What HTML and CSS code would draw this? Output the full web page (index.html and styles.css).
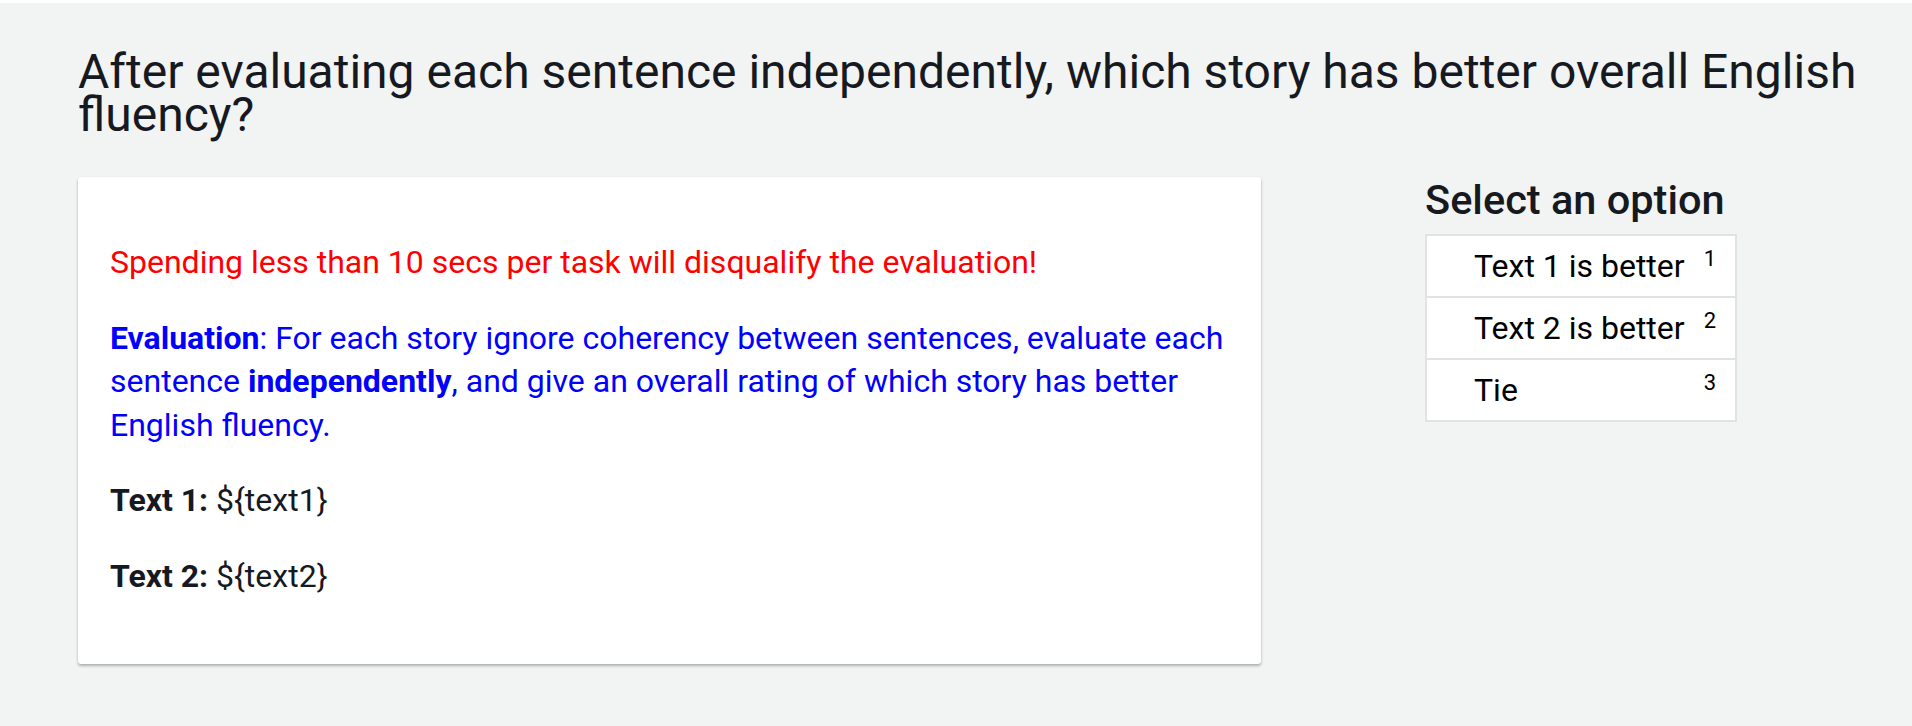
FILE: index.html
```html
<!DOCTYPE html>
<html lang="en">
<head>
<meta charset="utf-8">
<title>Classifier</title>
<link rel="stylesheet" href="styles.css">
</head>
<body>
<div class="page">
  <h1 class="question">After evaluating each sentence independently, which story has better overall English fluency?</h1>
  <div class="layout">
    <section class="card">
      <p class="warn">Spending less than 10 secs per task will disqualify the evaluation!</p>
      <p class="instr"><b>Evaluation</b>: For each story ignore coherency between sentences, evaluate each sentence <b>independently</b>, and give an overall rating of which story has better English fluency.</p>
      <p class="sample"><b>Text 1:</b> ${text1}</p>
      <p class="sample"><b>Text 2:</b> ${text2}</p>
    </section>
    <aside class="options">
      <h2 class="options-title">Select an option</h2>
      <ul class="option-list">
        <li class="option"><span class="label">Text 1 is better</span><span class="key">1</span></li>
        <li class="option"><span class="label">Text 2 is better</span><span class="key">2</span></li>
        <li class="option"><span class="label">Tie</span><span class="key">3</span></li>
      </ul>
    </aside>
  </div>
</div>
</body>
</html>
```
FILE: styles.css
```css
html, body {
  margin: 0;
  padding: 0;
  background: #ffffff;
}

body {
  font-family: Roboto, "Liberation Sans", Arial, sans-serif;
  color: #16191f;
}

.page {
  margin-top: 3px;
  min-height: 723px;
  box-sizing: border-box;
  background: #f2f3f3;
  padding: 47px 40px 0 78px;
}

.question {
  margin: 0;
  font-size: 48px;
  font-weight: 400;
  line-height: 43.2px;
  color: #16191f;
}

.layout {
  display: grid;
  grid-template-columns: 1183px 312px;
  column-gap: 164px;
  align-items: start;
  margin-top: 41px;
}

.card {
  background: #ffffff;
  border-radius: 3px;
  box-shadow: 0 2px 3px rgba(0, 0, 0, 0.28), 0 0 1px rgba(0, 0, 0, 0.12);
  padding: 32px 32px 34px;
  font-size: 32px;
  line-height: 43.5px;
}

.card p {
  margin: 32px 0;
}

.warn {
  color: #ff0000;
}

.instr {
  color: #0000ff;
}

.instr b,
.sample b {
  font-weight: 700;
}

.sample {
  color: #16191f;
}

.options-title {
  margin: 0;
  font-size: 41.5px;
  font-weight: 500;
  line-height: 46px;
  color: #16191f;
}

.option-list {
  list-style: none;
  margin: 11px 0 0;
  padding: 0;
  background: #ffffff;
  border: 2px solid #e1e2e2;
}

.option {
  display: flex;
  align-items: center;
  height: 60px;
  padding: 0 19px 0 47px;
  border-top: 2px solid #e1e2e2;
  color: #000000;
}

.option:first-child {
  border-top: none;
}

.label {
  flex: 1;
  font-size: 32px;
  line-height: normal;
}

.key {
  align-self: flex-start;
  padding-top: 10px;
  font-size: 22px;
  line-height: normal;
}
```
